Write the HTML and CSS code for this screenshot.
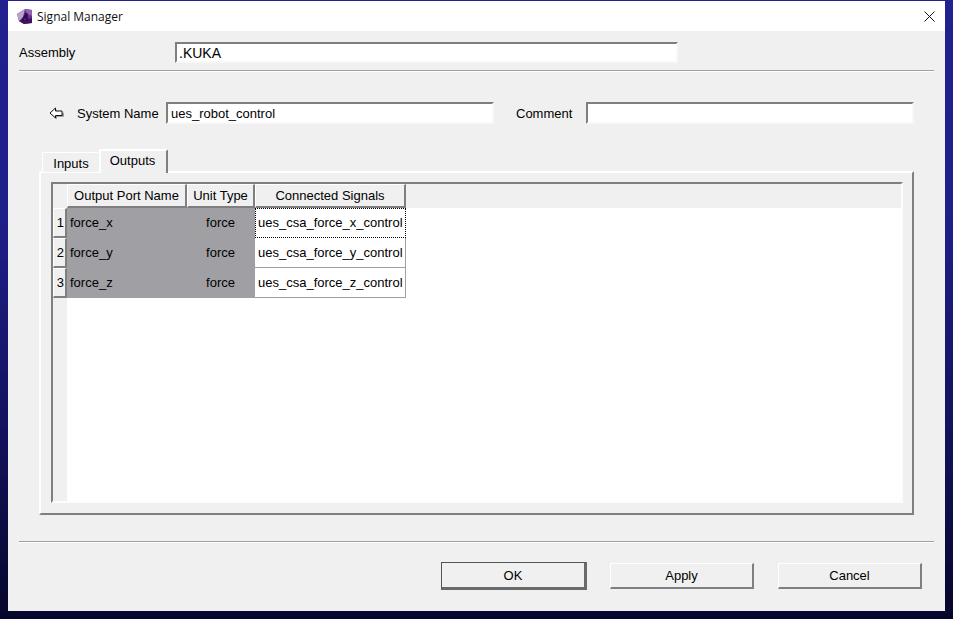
FILE: index.html
```html
<!DOCTYPE html>
<html lang="en">
<head>
<meta charset="utf-8">
<title>Signal Manager</title>
<link rel="stylesheet" href="styles.css">
</head>
<body>
<div class="window">
  <header class="titlebar">
    <svg class="app-icon" width="17" height="17" viewBox="0 0 17 17">
      <path d="M1 6 L9 1 L16 2 L16 15 L8 16 L3 13 Z" fill="#6a2c91"/>
      <path d="M1 6 L9 1 L7 9 L3 13 Z" fill="#b9a3c9"/>
      <path d="M9 1 L16 2 L16 8 L11 6 Z" fill="#8f63ad"/>
      <path d="M3 13 L8 16 L16 15 L16 10 Z" fill="#3f1461"/>
      <path d="M5 13 L9.5 5 L11.5 5 L12 13 L10.5 13 L10.3 10.5 L8.5 10.5 L7 13 Z" fill="#2c0d47"/>
    </svg>
    <span class="title">Signal Manager</span>
    <svg class="close" width="11" height="11" viewBox="0 0 11 11">
      <path d="M0.5 0.5 L10.5 10.5 M10.5 0.5 L0.5 10.5" stroke="#111" stroke-width="1" fill="none"/>
    </svg>
  </header>
  <main class="content">
    <div class="assembly-row">
      <label class="assembly-label">Assembly</label>
      <div class="field assembly-field">.KUKA</div>
    </div>
    <div class="rule rule-top"></div>
    <div class="system-row">
      <svg class="back-arrow" width="15" height="13" viewBox="0 0 15 13">
        <path d="M7 1.5 L1.5 6.5 L7 11.5 L7 9 L14 9 L14 5 L7 5 Z" fill="#8a8a8a" transform="translate(0.8 0.8)"/>
        <path d="M6.5 1 L1 6 L6.5 11 L6.5 8.5 L13 8.5 L13 4 L6.5 4 Z" fill="#fff" stroke="#111" stroke-width="1"/>
      </svg>
      <label class="system-label">System Name</label>
      <div class="field system-field">ues_robot_control</div>
      <label class="comment-label">Comment</label>
      <div class="field system-field"></div>
    </div>
    <div class="tabs">
      <div class="tab">Inputs</div>
      <div class="tab tab-active">Outputs</div>
    </div>
    <section class="panel">
      <div class="grid">
        <div class="grid-head">
          <div class="head-cell col-name">Output Port Name</div>
          <div class="head-cell col-unit">Unit Type</div>
          <div class="head-cell col-signal">Connected Signals</div>
        </div>
        <div class="grid-body">
          <div class="row-heads">
            <div class="row-head">1</div>
            <div class="row-head">2</div>
            <div class="row-head">3</div>
          </div>
          <div class="cells">
            <div class="row">
              <div class="cell col-name port">force_x</div>
              <div class="cell col-unit unit">force</div>
              <div class="cell col-signal signal focused">ues_csa_force_x_control</div>
            </div>
            <div class="row">
              <div class="cell col-name port">force_y</div>
              <div class="cell col-unit unit">force</div>
              <div class="cell col-signal signal">ues_csa_force_y_control</div>
            </div>
            <div class="row">
              <div class="cell col-name port">force_z</div>
              <div class="cell col-unit unit">force</div>
              <div class="cell col-signal signal">ues_csa_force_z_control</div>
            </div>
          </div>
        </div>
      </div>
    </section>
    <div class="rule rule-bottom"></div>
    <div class="buttons">
      <button class="btn btn-default">OK</button>
      <button class="btn btn-apply">Apply</button>
      <button class="btn btn-cancel">Cancel</button>
    </div>
  </main>
</div>
</body>
</html>
```

FILE: styles.css
```css
* { box-sizing: border-box; }
html, body { margin: 0; height: 100%; }
body {
  width: 953px;
  height: 619px;
  padding: 1px 8px 8px;
  overflow: hidden;
  background: linear-gradient(180deg, #21218f 0%, #1f1f8a 35%, #12125c 70%, #06062c 100%);
  font: 13px/1 "Liberation Sans", Arial, sans-serif;
  color: #000;
}
.window {
  width: 937px;
  height: 610px;
  background: #f0f0f0;
  display: flex;
  flex-direction: column;
}
.titlebar {
  height: 30px;
  flex: none;
  background: #fff;
  display: flex;
  align-items: center;
  padding: 0 10px 0 8px;
}
.app-icon { flex: none; }
.title {
  margin-left: 4px;
  font: 12px "Open Sans", sans-serif;
  color: #111;
  flex: 1;
}
.close { flex: none; margin-right: 0; }
.content { flex: 1; padding: 11px 11px 0; display: flex; flex-direction: column; }

.assembly-row { display: flex; align-items: center; height: 21px; }
.assembly-label { width: 156px; }
.field {
  background: #fff;
  display: flex;
  align-items: center;
  padding-left: 3px;
  border-top: 2px solid #7f7f7f;
  border-left: 2px solid #7f7f7f;
  border-right: 2px solid #f8f8f8;
  border-bottom: 2px solid #f8f8f8;
}
.assembly-field { width: 503px; height: 21px; font-size: 14px; padding-left: 2px; }

.rule {
  width: 915px;
  height: 2px;
  flex: none;
  border-top: 1px solid #a0a0a0;
  border-bottom: 1px solid #fff;
}
.rule-top { margin-top: 7px; }
.rule-bottom { margin-top: 26px; }

.system-row { margin-top: 30px; height: 22px; display: flex; align-items: center; padding-left: 30px; }
.back-arrow { flex: none; margin-right: 13px; }
.system-label { width: 89px; }
.system-field { width: 328px; height: 22px; }
.comment-label { width: 70px; margin-left: 22px; }

.tabs {
  margin-top: 25px;
  height: 23px;
  padding-left: 23px;
  display: flex;
  align-items: flex-end;
  position: relative;
  z-index: 1;
  flex: none;
}
.tab {
  width: 57px;
  height: 20px;
  background: #f0f0f0;
  border-top: 1px solid #fff;
  border-left: 1px solid #fff;
  border-radius: 2px 2px 0 0;
  padding-top: 4px;
  text-align: center;
}
.tab-active {
  width: 69px;
  height: 24px;
  margin-left: 0;
  margin-bottom: -1px;
  border-top: 2px solid #fff;
  border-left: 2px solid #fff;
  border-right: 2px solid #7f7f7f;
  padding-top: 3px;
  padding-right: 2px;
}
.panel {
  margin-left: 20px;
  margin-top: -1px;
  width: 875px;
  height: 344px;
  flex: none;
  padding: 11px 11px 12px 12px;
  border-top: 2px solid #fff;
  border-left: 2px solid #fff;
  border-right: 2px solid #7f7f7f;
  border-bottom: 2px solid #7f7f7f;
  padding: 9px 9px 10px 10px;
}
.grid {
  width: 852px;
  height: 321px;
  border-top: 2px solid #7f7f7f;
  border-left: 2px solid #7f7f7f;
  border-right: 2px solid #fcfcfc;
  border-bottom: 2px solid #fcfcfc;
  display: flex;
  flex-direction: column;
}
.grid-head {
  height: 24px;
  flex: none;
  display: flex;
  padding-left: 14px;
  background: #f0f0f0;
}
.head-cell {
  height: 24px;
  display: flex;
  align-items: center;
  justify-content: center;
  border-top: 1px solid #fff;
  border-left: 1px solid #fff;
  border-right: 2px solid #7f7f7f;
  border-bottom: 2px solid #7f7f7f;
  padding-bottom: 0;
}
.col-name { width: 120px; flex: none; }
.col-unit { width: 68px; flex: none; }
.col-signal { width: 151px; flex: none; }
.grid-body { flex: 1; display: flex; min-height: 0; }
.row-heads { width: 14px; flex: none; background: #f0f0f0; }
.row-head {
  height: 30px;
  display: flex;
  align-items: center;
  justify-content: flex-end;
  padding-right: 1px;
  border-top: 1px solid #fff;
  border-left: 1px solid #fff;
  border-right: 2px solid #7f7f7f;
  border-bottom: 2px solid #7f7f7f;
}
.cells { flex: 1; background: #fff; }
.row { display: flex; height: 30px; }
.cell { height: 30px; display: flex; align-items: center; }
.port { background: #a0a0a4; padding-left: 3px; padding-bottom: 1px; }
.unit { background: #a0a0a4; justify-content: center; padding-bottom: 1px; padding-right: 1px; }
.signal {
  background: #fff;
  padding-left: 3px;
  padding-bottom: 1px;
  border-right: 1px solid #a0a0a0;
  border-bottom: 1px solid #a0a0a0;
}
.focused { border: 1px dotted #000; padding-left: 2px; }

.buttons {
  margin-top: 19px;
  padding-left: 422px;
  display: flex;
  align-items: center;
  height: 28px;
  flex: none;
}
.btn {
  font: 13px "Liberation Sans", Arial, sans-serif;
  color: #000;
  background: #f0f0f0;
  width: 144px;
  height: 26px;
  padding: 0;
  border-top: 1px solid #fff;
  border-left: 1px solid #fff;
  border-right: 2px solid #7f7f7f;
  border-bottom: 2px solid #7f7f7f;
}
.btn-default {
  width: 146px;
  height: 28px;
  border: 1px solid #555;
  border-right: 3px solid #6a6a6a;
  border-bottom: 3px solid #6a6a6a;
}
.btn-apply { margin-left: 23px; }
.btn-cancel { margin-left: 24px; }
```
